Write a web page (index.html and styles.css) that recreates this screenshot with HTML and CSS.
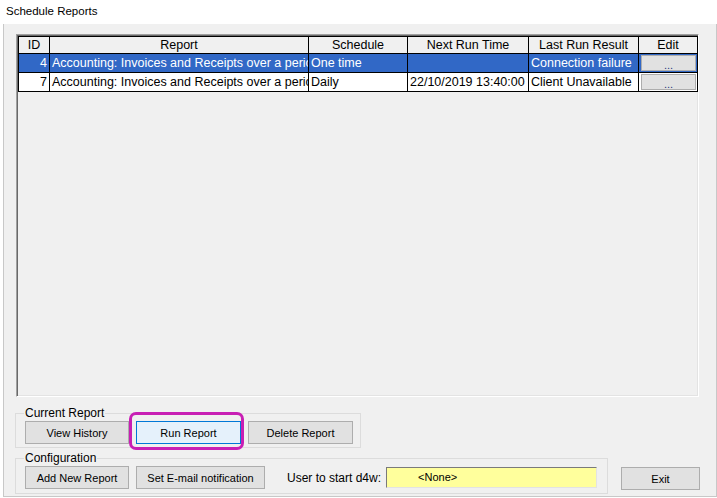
FILE: index.html
```html
<!DOCTYPE html>
<html>
<head>
<meta charset="utf-8">
<link rel="stylesheet" href="styles.css">
</head>
<body>
<div class="titlebar">Schedule Reports</div>
<div class="client">
  <div class="listframe">
    <div class="grid">
      <div class="row head">
        <div class="c">ID</div>
        <div class="c">Report</div>
        <div class="c">Schedule</div>
        <div class="c">Next Run Time</div>
        <div class="c">Last Run Result</div>
        <div class="c">Edit</div>
      </div>
      <div class="row sel">
        <div class="c num">4</div>
        <div class="c">Accounting: Invoices and Receipts over a period</div>
        <div class="c">One time</div>
        <div class="c"></div>
        <div class="c">Connection failure</div>
        <div class="c editcell"><span class="dots">...</span></div>
      </div>
      <div class="row">
        <div class="c num">7</div>
        <div class="c">Accounting: Invoices and Receipts over a period</div>
        <div class="c">Daily</div>
        <div class="c">22/10/2019 13:40:00</div>
        <div class="c">Client Unavailable</div>
        <div class="c editcell"><span class="dots">...</span></div>
      </div>
    </div>
  </div>

  <fieldset class="group current">
    <legend>Current Report</legend>
    <div class="btnrow">
      <button class="btn w104">View History</button>
      <span class="focuswrap"><button class="btn w105 focus">Run Report</button></span>
      <button class="btn w105">Delete Report</button>
    </div>
  </fieldset>

  <div class="bottomrow">
    <fieldset class="group config">
      <legend>Configuration</legend>
      <div class="btnrow">
        <button class="btn w104">Add New Report</button>
        <button class="btn w129">Set E-mail notification</button>
        <span class="userlabel">User to start d4w:</span>
        <div class="userbox">&lt;None&gt;</div>
      </div>
    </fieldset>
    <button class="btn exit">Exit</button>
  </div>
</div>
</body>
</html>
```

FILE: styles.css
```css
* { box-sizing: border-box; }

body {
  margin: 0;
  width: 717px;
  height: 498px;
  overflow: hidden;
  background: #ffffff;
  font-family: "Liberation Sans", Arial, sans-serif;
  font-size: 12px;
  color: #000;
}

.titlebar {
  height: 24px;
  padding: 4px 0 0 6px;
  line-height: 15px;
  font-size: 11.5px;
}

.client {
  margin-left: 3px;
  width: 714px;
  height: 473px;
  border: 1px solid #c8c8c8;
  border-top: none;
  background: #f0f0f0;
  padding: 10px 0 0 12px;
}

.listframe {
  width: 683px;
  height: 363px;
  border: 1px solid;
  border-color: #a0a0a0 #ffffff #ffffff #a0a0a0;
  box-shadow: inset 1px 1px 0 #696969, inset -1px -1px 0 #e3e3e3;
  padding: 1px;
  background: #f0f0f0;
}

.grid {
  width: 680px;
  border-left: 1px solid #000;
  border-top: 1px solid #000;
  font-size: 12.5px;
}

.row {
  display: grid;
  grid-template-columns: 31px 259px 99px 121px 110px 59px;
  height: 19px;
  background: #ffffff;
}

.row.head {
  height: 17px;
  background: #f0f0f0;
}

.c {
  border-right: 1px solid #000;
  border-bottom: 1px solid #000;
  padding: 0 2px;
  white-space: nowrap;
  overflow: hidden;
  line-height: 18px;
}

.head .c {
  text-align: center;
  line-height: 16px;
}

.row.sel {
  background: #3168c6;
  color: #fff;
}

.num { text-align: right; }

.editcell {
  padding: 1px 1px 1px 2px;
}

.dots {
  display: flex;
  justify-content: center;
  align-items: flex-end;
  height: 16px;
  background: #e1e1e1;
  border: 1px solid #adadad;
  color: #2a3a80;
  font-size: 11px;
  line-height: 10px;
}

.group {
  margin: 0 0 0 -1px;
  border: 1px solid #dcdcdc;
  padding: 1px 8px 3px 9px;
  min-width: 0;
}

.group legend {
  padding: 0 1px;
  margin-left: -1px;
  line-height: 14px;
  font-size: 12px;
}

.current {
  width: 346px;
  margin-top: 9px;
}

.btnrow {
  display: flex;
  align-items: center;
  gap: 7px;
}

.btn {
  flex-shrink: 0;
  height: 23px;
  padding: 0;
  background: #e1e1e1;
  border: 1px solid #adadad;
  font-family: "Liberation Sans", Arial, sans-serif;
  font-size: 11px;
  color: #000;
}

.w104 { width: 104px; }
.w105 { width: 105px; }
.w129 { width: 129px; }

.focuswrap {
  position: relative;
  display: flex;
  flex-shrink: 0;
}

.btn.focus {
  background: #e5f1fb;
  border-color: #0078d7;
}

.focuswrap::after {
  content: "";
  position: absolute;
  left: -7px;
  top: -9px;
  right: -3px;
  bottom: -6px;
  border: 3px solid #c81fb4;
  border-radius: 7px;
}

.bottomrow {
  display: flex;
  margin-top: 3px;
}

.config {
  width: 593px;
  flex-shrink: 0;
  padding-bottom: 4px;
}

.userlabel {
  flex-shrink: 0;
  white-space: nowrap;
  margin-left: 15px;
  line-height: 14px;
  font-size: 12px;
}

.userbox {
  flex-shrink: 0;
  margin-left: -2px;
  width: 211px;
  height: 21px;
  background: #ffff9c;
  border: 1px solid;
  border-color: #7a7a7a #e3e3e3 #e3e3e3 #7a7a7a;
  padding-left: 31px;
  font-size: 11px;
  line-height: 19px;
}

.btn.exit {
  width: 79px;
  align-self: flex-end;
  margin: 0 0 4px 13px;
}
```
